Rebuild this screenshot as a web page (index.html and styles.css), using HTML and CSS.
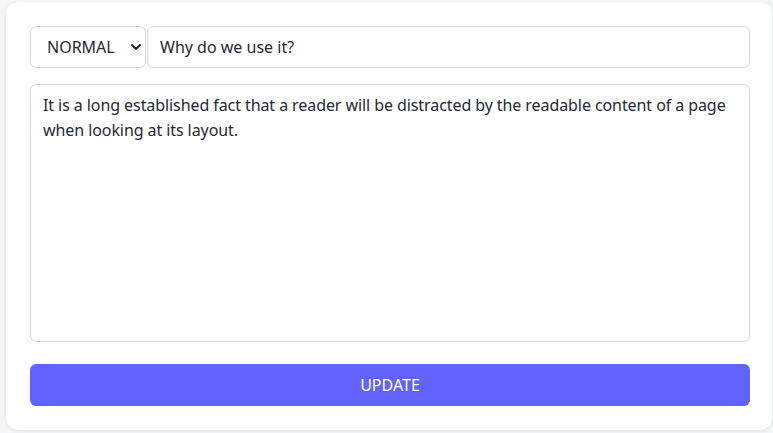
FILE: index.html
```html
<!DOCTYPE html>
<html lang="en">
<head>
<meta charset="utf-8">
<title>Editor</title>
<link rel="stylesheet" href="styles.css">
</head>
<body>
<div class="card">
  <div class="row">
    <div class="select">
      <span>NORMAL</span>
      <svg class="chev" width="12" height="8" viewBox="0 0 12 8"><path d="M2 2 L6 6 L10 2" fill="none" stroke="#1f2937" stroke-width="2" stroke-linecap="round" stroke-linejoin="round"/></svg>
    </div>
    <div class="input">Why do we use it?</div>
  </div>
  <div class="textarea">It is a long established fact that a reader will be distracted by the readable content of a page when looking at its layout.</div>
  <div class="button">UPDATE</div>
</div>
</body>
</html>
```
FILE: styles.css
```css
html, body { margin: 0; padding: 0; }
body {
  background: #f5f6f8;
  font-family: "Noto Sans", "Noto Sans CJK KR", sans-serif;
  color: #1f2937;
  font-size: 16px;
  padding: 2px 1px 3px 6px;
  height: 433px;
  box-sizing: border-box;
}
.card {
  background: #fff;
  border-radius: 12px;
  box-shadow: 0 1px 4px rgba(0,0,0,0.09);
  padding: 24px 22px 24px 24px;
  display: flex;
  flex-direction: column;
  height: 100%;
  box-sizing: border-box;
}
.row { display: flex; gap: 1px; }
.select {
  width: 116px;
  height: 42px;
  box-sizing: border-box;
  border: 1px solid #d6d8de;
  border-radius: 6px;
  display: flex;
  align-items: center;
  padding: 0 3px 0 16px;
  justify-content: space-between;
}
.input {
  flex: 1;
  height: 42px;
  box-sizing: border-box;
  border: 1px solid #d6d8de;
  border-radius: 6px;
  display: flex;
  align-items: center;
  padding: 0 12px;
}
.textarea {
  margin-top: 16px;
  height: 258px;
  box-sizing: border-box;
  border: 1px solid #d6d8de;
  border-radius: 6px;
  padding: 8px 12px;
  line-height: 25px;
  letter-spacing: -0.08px;
}
.button {
  margin-top: 22px;
  height: 42px;
  background: #6262ff;
  color: #fff;
  border-radius: 6px;
  display: flex;
  align-items: center;
  justify-content: center;
}
```
